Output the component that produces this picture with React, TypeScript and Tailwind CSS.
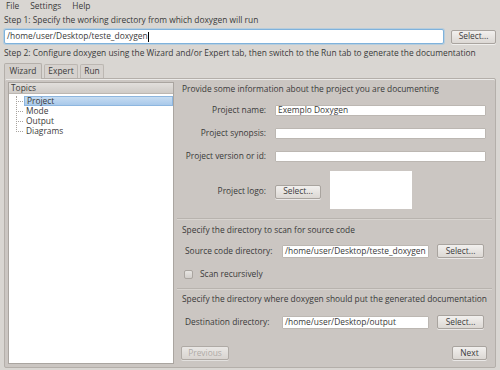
import React from "react";

const btn =
  "h-[14px] rounded-[2px] border border-[#a9a49f] bg-gradient-to-b from-[#f2f0ee] to-[#dcd8d4] text-[#3c3c3c] flex items-center justify-center shadow-[0_1px_0_rgba(255,255,255,0.6)]";

function Field({ value, w, h = "h-[12px]" }: { value?: string; w: string; h?: string }) {
  return (
    <div className={`${h} ${w} bg-white border border-[#bcb7b2] rounded-[1px] flex items-center px-[2px] whitespace-nowrap overflow-hidden`}>
      {value}
    </div>
  );
}

export default function App() {
  return (
    <div
      className="w-[500px] h-[370px] bg-[#d9d6d2] text-[#3a3a3a] text-[8.4px] leading-none flex flex-col overflow-hidden whitespace-nowrap"
      style={{ fontFamily: '"Open Sans", "DejaVu Sans", sans-serif' }}
    >
      {/* menu */}
      <div className="h-[12px] flex items-center gap-[11px] px-[6px]">
        <span>File</span>
        <span>Settings</span>
        <span>Help</span>
      </div>
      <div className="h-[17px] flex items-center px-[4px]">
        Step 1: Specify the working directory from which doxygen will run
      </div>
      <div className="h-[15px] flex items-center px-[4px] gap-[7px]">
        <div className="h-[15px] flex-1 bg-white border border-[#7fb2dc] rounded-[2px] shadow-[0_0_0_1px_rgba(150,195,230,0.5)] flex items-center px-[2px]">
          /home/user/Desktop/teste_doxygen<span className="w-px h-[10px] bg-black" />
        </div>
        <div className={`${btn} w-[45px]`}>Select...</div>
      </div>
      <div className="h-[19px] flex items-center px-[4px]">
        Step 2: Configure doxygen using the Wizard and/or Expert tab, then switch to the Run tab to generate the documentation
      </div>
      {/* tabs */}
      <div className="h-[15px] flex items-end px-[4px] gap-[2px] relative z-10">
        <div className="h-[16px] w-[38px] bg-[#d3cfcb] border border-b-0 border-[#b4afaa] rounded-t-[2px] flex items-center justify-center mb-[-1px]">
          Wizard
        </div>
        <div className="h-[14px] w-[34px] bg-[#d6d2ce] border border-b-0 border-[#bcb7b2] rounded-t-[2px] flex items-center justify-center">
          Expert
        </div>
        <div className="h-[14px] w-[24px] bg-[#d6d2ce] border border-b-0 border-[#bcb7b2] rounded-t-[2px] flex items-center justify-center">
          Run
        </div>
      </div>
      {/* panel */}
      <div className="h-[290px] mx-[4px] border border-[#b4afaa] rounded-[2px] bg-[#cbc6c2] flex p-[3px] gap-[3px] shadow-[inset_0_1px_0_#ecebe9]">
        {/* tree */}
        <div className="w-[169px] bg-white border border-[#aaa5a0] flex flex-col">
          <div className="h-[11px] bg-gradient-to-b from-[#e2dfdc] to-[#cfcbc7] border-b border-[#bcb7b2] flex items-center px-[2px]">
            Topics
          </div>
          <div className="relative pt-[2px]">
            <div className="absolute left-[7px] top-[2px] h-[36px] border-l border-dotted border-[#a8a39e]" />
            {["Project", "Mode", "Output", "Diagrams"].map((t, i) => (
              <div key={t} className="h-[10px] flex items-center">
                <div className="w-[15px] flex items-center justify-end pr-[1px]">
                  <div className="w-[7px] border-t border-dotted border-[#a8a39e]" />
                </div>
                <div
                  className={`flex-1 h-[10px] flex items-center px-[2px] ${
                    i === 0 ? "bg-gradient-to-b from-[#c6dcf2] to-[#a9c9ea] border border-[#8db6df]" : ""
                  }`}
                >
                  {t}
                </div>
              </div>
            ))}
          </div>
        </div>
        {/* right */}
        <div className="flex-1 flex flex-col">
          <div className="h-[12px] flex items-end px-[5px] pb-[1px]">
            Provide some information about the project you are documenting
          </div>
          <div className="flex flex-col gap-[12px] mt-[11px] pr-[6px]">
            {[
              ["Project name:", "Exemplo Doxygen"],
              ["Project synopsis:", ""],
              ["Project version or id:", ""],
            ].map(([l, v]) => (
              <div key={l} className="flex items-center h-[11px]">
                <div className="w-[98px] text-right pr-[9px]">{l}</div>
                <Field value={v} w="flex-1" h="h-[11px]" />
              </div>
            ))}
          </div>
          <div className="flex items-center mt-[9px] h-[38px]">
            <div className="w-[98px] text-right pr-[9px] pt-[3px]">Project logo:</div>
            <div className={`${btn} w-[46px] mt-[3px]`}>Select...</div>
            <div className="w-[82px] h-[38px] bg-white ml-[9px]" />
          </div>
          <div className="mt-[9px] border-t border-[#b8b3ae] shadow-[0_1px_0_#d8d4d0]" />
          <div className="h-[10px] mt-[6px] px-[5px] flex items-center">Specify the directory to scan for source code</div>
          <div className="flex items-center mt-[9px] h-[14px] pl-[8px]">
            <div className="w-[97px]">Source code directory:</div>
            <Field value="/home/user/Desktop/teste_doxygen" w="w-[147px]" h="h-[13px]" />
            <div className={`${btn} w-[47px] ml-[8px]`}>Select...</div>
          </div>
          <div className="flex items-center mt-[11px] h-[10px] pl-[7px] gap-[7px]">
            <div className="w-[9px] h-[9px] rounded-[2px] border border-[#aaa5a0] bg-gradient-to-b from-[#e8e6e3] to-[#d2cecb]" />
            <span>Scan recursively</span>
          </div>
          <div className="mt-[9px] border-t border-[#b8b3ae] shadow-[0_1px_0_#d8d4d0]" />
          <div className="h-[10px] mt-[5px] px-[5px] flex items-center">
            Specify the directory where doxygen should put the generated documentation
          </div>
          <div className="flex items-center mt-[11px] h-[14px] pl-[8px]">
            <div className="w-[97px]">Destination directory:</div>
            <Field value="/home/user/Desktop/output" w="w-[147px]" h="h-[13px]" />
            <div className={`${btn} w-[47px] ml-[8px]`}>Select...</div>
          </div>
          <div className="flex items-center justify-between mt-[17px] pl-[4px] pr-[5px]">
            <div className={`${btn} w-[48px] text-[#a9a49f] opacity-80`}>Previous</div>
            <div className={`${btn} w-[35px]`}>Next</div>
          </div>
        </div>
      </div>
    </div>
  );
}
